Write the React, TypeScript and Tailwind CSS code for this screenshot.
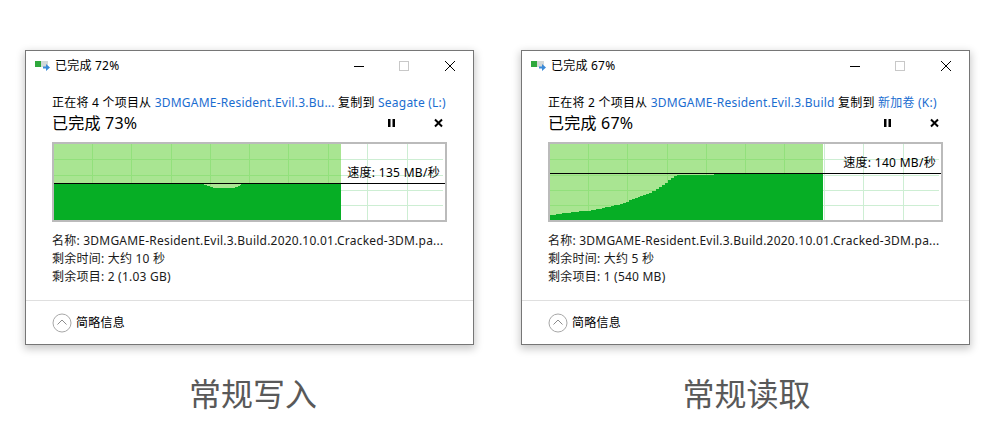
const font = "font-['Noto_Sans','Noto_Sans_CJK_SC',sans-serif]";

type DialogProps = {
  title: string;
  count: string;
  source: string;
  target: string;
  done: string;
  speed: string;
  remaining: string;
  items: string;
  fillWidth: number;
  lineY: number;
  area: string;
  caption: string;
  captionClass: string;
};

// turn a curve into the small stair steps the transfer graph draws
function stairs(points: [number, number][], stop: number) {
  const out: string[] = [];
  for (let i = 0; i < points.length - 1; i++) {
    const [x0, y0] = points[i];
    const [x1, y1] = points[i + 1];
    for (let x = x0; x < x1; x += 3) {
      const y = Math.round(y0 + ((y1 - y0) * (x - x0)) / (x1 - x0));
      out.push(`${x},${y}`, `${Math.min(x + 3, x1)},${y}`);
    }
  }
  return `${out.join(" ")} ${stop},29 ${stop},76 0,76`;
}

function TransferIcon() {
  return (
    <svg width="16" height="12" viewBox="0 0 16 12">
      <rect x="0" y="1" width="13" height="6" fill="#d3d8d8" />
      <rect x="0" y="1" width="6" height="6" fill="#2fa83c" />
      <path d="M8 6.5h3V4l4 3.5-4 3.5V8.5H8z" fill="#3b8ad8" />
    </svg>
  );
}

function Chart({ fillWidth, lineY, area }: Pick<DialogProps, "fillWidth" | "lineY" | "area">) {
  const xs = [38, 77, 117, 156, 195, 234, 274, 313, 353];
  const ys = [15, 31, 46, 61];
  return (
    <svg width="391" height="76" viewBox="0 0 391 76" shapeRendering="crispEdges" className="block">
      <rect width="391" height="76" fill="#ffffff" />
      {xs.map((x) => (
        <rect key={x} x={x} y="0" width="1" height="76" fill="#cdeed3" />
      ))}
      {ys.map((y) => (
        <rect key={y} x="0" y={y} width="389" height="1" fill="#cdeed3" />
      ))}
      <rect width={fillWidth} height="76" fill="#a9e592" />
      {xs.filter((x) => x < fillWidth).map((x) => (
        <rect key={x} x={x} y="0" width="1" height="76" fill="#92e07c" />
      ))}
      {ys.map((y) => (
        <rect key={y} x="0" y={y} width={fillWidth} height="1" fill="#92e07c" />
      ))}
      <polygon points={area} fill="#06ae25" />
      <rect x="0" y={lineY} width="391" height="1" fill="#000000" />
    </svg>
  );
}

function Dialog(p: DialogProps) {
  return (
    <div className="flex w-[449px] flex-col items-center">
      <div className="flex h-[295px] w-[449px] flex-col border border-[#767676] bg-white tracking-[0.22px] text-black shadow-[0_3px_8px_1px_rgba(0,0,0,0.22)]">
        <div className="flex h-[29px] items-center pl-[9px] text-[12px]">
          <TransferIcon />
          <span className="ml-[4px] flex-1">{p.title}</span>
          <svg width="101" height="12" viewBox="0 0 101 12" className="mr-[18px]">
            <rect x="0" y="6" width="10" height="1" fill="#000" />
            <rect x="45.5" y="1.5" width="9" height="9" fill="none" stroke="#c8c8c8" />
            <path d="M91 1l10 10M101 1L91 11" stroke="#000" fill="none" />
          </svg>
        </div>
        <div className="flex flex-col px-[26px]">
          <div className="mt-[15px] h-[16px] text-[12px] leading-[16px] whitespace-nowrap">
            正在将 {p.count} 个项目从 <span className="text-[#1a6dd0]">{p.source}</span> 复制到{" "}
            <span className="text-[#1a6dd0]">{p.target}</span>
          </div>
          <div className="mt-[1px] flex h-[22px] items-center">
            <span className="flex-1 text-[16px] leading-[22px]">{p.done}</span>
            <svg width="56" height="10" viewBox="0 0 56 10" className="mr-[4px]">
              <rect x="1" y="1" width="2.5" height="8" fill="#000" />
              <rect x="5.5" y="1" width="2.5" height="8" fill="#000" />
              <path d="M48 1.5l7 7M55 1.5l-7 7" stroke="#000" strokeWidth="2" fill="none" />
            </svg>
          </div>
          <div className="relative mt-[8px] h-[80px] w-[395px] border-2 border-[#bbbbbb]">
            <Chart fillWidth={p.fillWidth} lineY={p.lineY} area={p.area} />
            <span
              className="absolute right-[5px] text-[12px] leading-[16px] tracking-[0.3px]"
              style={{ top: p.lineY - 18 }}
            >
              {p.speed}
            </span>
          </div>
          <div className="mt-[10px] flex flex-col text-[12px] leading-[18px] text-[#1a1a1a]">
            <span className="whitespace-nowrap">名称: 3DMGAME-Resident.Evil.3.Build.2020.10.01.Cracked-3DM.pa...</span>
            <span>剩余时间: {p.remaining}</span>
            <span>剩余项目: {p.items}</span>
          </div>
        </div>
        <div className="mt-[14px] flex flex-1 items-center border-t border-[#dfdfdf] px-[26px] text-[12px]">
          <svg width="20" height="20" viewBox="0 0 20 20">
            <circle cx="10" cy="10" r="9" fill="none" stroke="#a8a8a8" />
            <path d="M5.5 11.5L10 7l4.5 4.5" fill="none" stroke="#8c8c8c" />
          </svg>
          <span className="ml-[4px]">简略信息</span>
        </div>
      </div>
      <div className={p.captionClass}>{p.caption}</div>
    </div>
  );
}

export default function App() {
  return (
    <div className={`${font} flex h-[434px] w-[1000px] gap-[47px] overflow-hidden bg-white pl-[25px] pt-[50px]`}>
      <Dialog
        title="已完成 72%"
        count="4"
        source="3DMGAME-Resident.Evil.3.Bu..."
        target="Seagate (L:)"
        done="已完成 73%"
        speed="速度: 135 MB/秒"
        remaining="大约 10 秒"
        items="2 (1.03 GB)"
        fillWidth={287}
        lineY={39}
        area="0,39 149,39 149,40 154,42 160,44 180,44 185,42 188,40 188,39 287,39 287,76 0,76"
        caption="常规写入"
        captionClass="mt-[27px] pl-[7px] text-[32px] leading-[44px] text-[#595959]"
      />
      <Dialog
        title="已完成 67%"
        count="2"
        source="3DMGAME-Resident.Evil.3.Build"
        target="新加卷 (K:)"
        done="已完成 67%"
        speed="速度: 140 MB/秒"
        remaining="大约 5 秒"
        items="1 (540 MB)"
        fillWidth={273}
        lineY={29}
        area={stairs(
          [
            [0, 71],
            [23, 68],
            [43, 66],
            [70, 60],
            [90, 52],
            [103, 47],
            [112, 41],
            [118, 36],
            [128, 30],
          ],
          273,
        )}
        caption="常规读取"
        captionClass="mt-[27px] pl-[2px] text-[32px] leading-[44px] text-[#595959]"
      />
    </div>
  );
}
